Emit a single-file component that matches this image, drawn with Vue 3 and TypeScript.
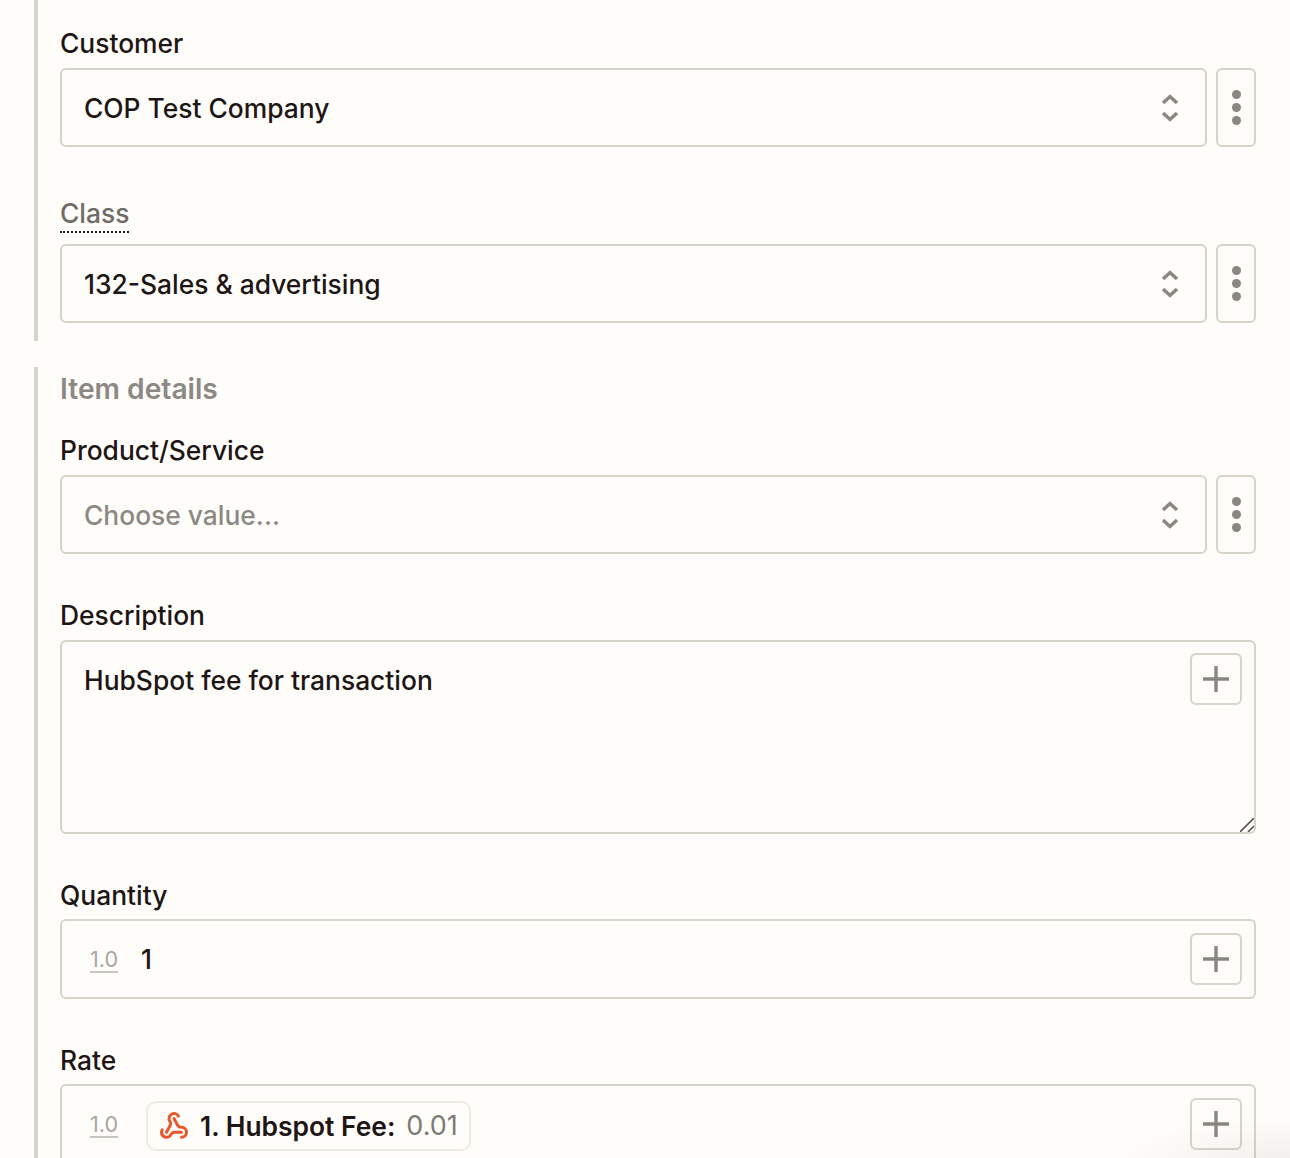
<script setup lang="ts">
const chevrons = "M1 9 L8 2.5 L15 9 M1 19 L8 25.5 L15 19";
</script>

<template>
  <div class="page">
    <section class="group first">
      <div class="label">Customer</div>
      <div class="row">
        <div class="box select"><span class="value">COP Test Company</span>
          <svg class="chev" width="18" height="28" viewBox="0 0 16 28"><path :d="chevrons" /></svg>
        </div>
        <button class="kebab"><i></i><i></i><i></i></button>
      </div>
      <div class="label dotted"><span>Class</span></div>
      <div class="row">
        <div class="box select"><span class="value">132-Sales &amp; advertising</span>
          <svg class="chev" width="18" height="28" viewBox="0 0 16 28"><path :d="chevrons" /></svg>
        </div>
        <button class="kebab"><i></i><i></i><i></i></button>
      </div>
    </section>

    <section class="group second">
      <div class="heading">Item details</div>
      <div class="label">Product/Service</div>
      <div class="row">
        <div class="box select"><span class="value muted">Choose value...</span>
          <svg class="chev" width="18" height="28" viewBox="0 0 16 28"><path :d="chevrons" /></svg>
        </div>
        <button class="kebab"><i></i><i></i><i></i></button>
      </div>

      <div class="label spaced">Description</div>
      <div class="box area">
        <span class="text">HubSpot fee for transaction</span>
        <button class="plus"><svg width="26" height="26" viewBox="0 0 26 26"><path d="M13 0v26M0 13h26" /></svg></button>
        <svg class="grip" width="14" height="14" viewBox="0 0 14 14"><path d="M0 14 14 0M8 14l6-6" /></svg>
      </div>

      <div class="label spaced short">Quantity</div>
      <div class="box line">
        <span class="num">1.0</span>
        <span class="value">1</span>
        <button class="plus"><svg width="26" height="26" viewBox="0 0 26 26"><path d="M13 0v26M0 13h26" /></svg></button>
      </div>

      <div class="label spaced short">Rate</div>
      <div class="box line">
        <span class="num">1.0</span>
        <span class="chip">
          <svg class="hook" width="30" height="30" viewBox="0 0 24 24"><path d="M18 16.98h-5.99c-1.1 0-1.95.94-2.48 1.9A4 4 0 0 1 2 17c.01-.7.2-1.4.57-2" /><path d="m6 17 3.13-5.78c.53-.97.1-2.18-.5-3.1a4 4 0 1 1 6.89-4.06" /><path d="m12 6 3.13 5.73C15.66 12.7 16.9 13 18 13a4 4 0 0 1 0 8" /></svg>
          <b>1. Hubspot Fee:</b>
          <em>0.01</em>
        </span>
        <button class="plus"><svg width="26" height="26" viewBox="0 0 26 26"><path d="M13 0v26M0 13h26" /></svg></button>
      </div>
    </section>
    <div class="fade"></div>
  </div>
</template>

<style>
html, body { margin: 0; background: #fffdf9; }
</style>

<style scoped>
.page {
  position: relative;
  box-sizing: border-box;
  width: 1290px;
  height: 1158px;
  overflow: hidden;
  padding-left: 34px;
  padding-right: 34px;
  background: #fffdf9;
  color: #201515;
  font-family: Inter, "Liberation Sans", sans-serif;
  font-size: 26.4px;
  line-height: 32px;
  font-weight: 500;
}
.group {
  border-left: 4px solid #d7d3cd;
  padding-left: 22px;
}
.first { height: 341px; box-sizing: border-box; padding-top: 27px; }
.second { margin-top: 26px; padding-top: 6px; }
.label { margin-bottom: 9px; height: 32px; line-height: 32px; }
.dotted { margin-top: 51px; margin-bottom: 14px; color: #6f6b67; line-height: 30px; }
.dotted span { display: inline-block; height: 35px; border-bottom: 2px dotted #201515; box-sizing: border-box; }
.heading { color: #8c8884; height: 32px; margin-bottom: 29px; font-size: 28.2px; font-weight: 600; }
.spaced { margin-top: 45px; }
.short { margin-bottom: 8px; }
.row { display: flex; gap: 9px; }
.box {
  box-sizing: border-box;
  display: flex;
  align-items: center;
  position: relative;
  border: 2px solid #d7d3c9;
  border-radius: 6px;
  background: #fffdf9;
}
.select { flex: 1; height: 79px; padding: 0 26px 0 22px; justify-content: space-between; }
.muted { color: #8c8884; }
.chev { fill: none; stroke: #8a8682; stroke-width: 3.4; }
.kebab {
  box-sizing: border-box;
  width: 40px;
  height: 79px;
  padding: 0;
  display: flex;
  flex-direction: column;
  align-items: center;
  justify-content: center;
  gap: 4px;
  border: 2px solid #d7d3c9;
  border-radius: 6px;
  background: #fffdf9;
}
.kebab i { width: 9px; height: 9px; border-radius: 50%; background: #8a8682; }
.area { height: 194px; align-items: flex-start; padding: 22px; }
.line { height: 80px; padding-left: 28px; }
.plus {
  position: absolute;
  top: 12px;
  right: 12px;
  box-sizing: border-box;
  width: 52px;
  height: 52px;
  padding: 0;
  display: flex;
  align-items: center;
  justify-content: center;
  border: 2px solid #d7d3c9;
  border-radius: 6px;
  background: #fffdf9;
}
.area .plus { top: 11px; }
.plus svg { fill: none; stroke: #8a8682; stroke-width: 3.4; }
.grip { position: absolute; right: 0; bottom: 0; fill: none; stroke: #555; stroke-width: 1.6; }
.num {
  font-size: 21.6px;
  line-height: 24px;
  font-weight: 400;
  color: #a9a5a0;
  border-bottom: 2px solid #c9c5bf;
  margin-top: 2px;
  margin-right: 23px;
}
.chip {
  box-sizing: border-box;
  height: 50px;
  display: inline-flex;
  align-items: center;
  padding: 0 11px 0 11px;
  margin-left: 5px;
  margin-top: 4px;
  border: 2px solid #eeebe4;
  border-radius: 10px;
}
.chip b { font-weight: 600; margin-left: 11px; }
.chip em { font-size: 27px; font-style: normal; font-weight: 400; color: #7e7a76; margin-left: 11px; }
.hook { fill: none; stroke: #e8582a; stroke-width: 2.4; stroke-linecap: round; stroke-linejoin: round; }
.fade {
  position: absolute;
  right: 0;
  bottom: 0;
  width: 180px;
  height: 40px;
  background: radial-gradient(ellipse at 100% 100%, rgba(120, 120, 120, 0.1), rgba(120, 120, 120, 0) 70%);
  pointer-events: none;
}
</style>
